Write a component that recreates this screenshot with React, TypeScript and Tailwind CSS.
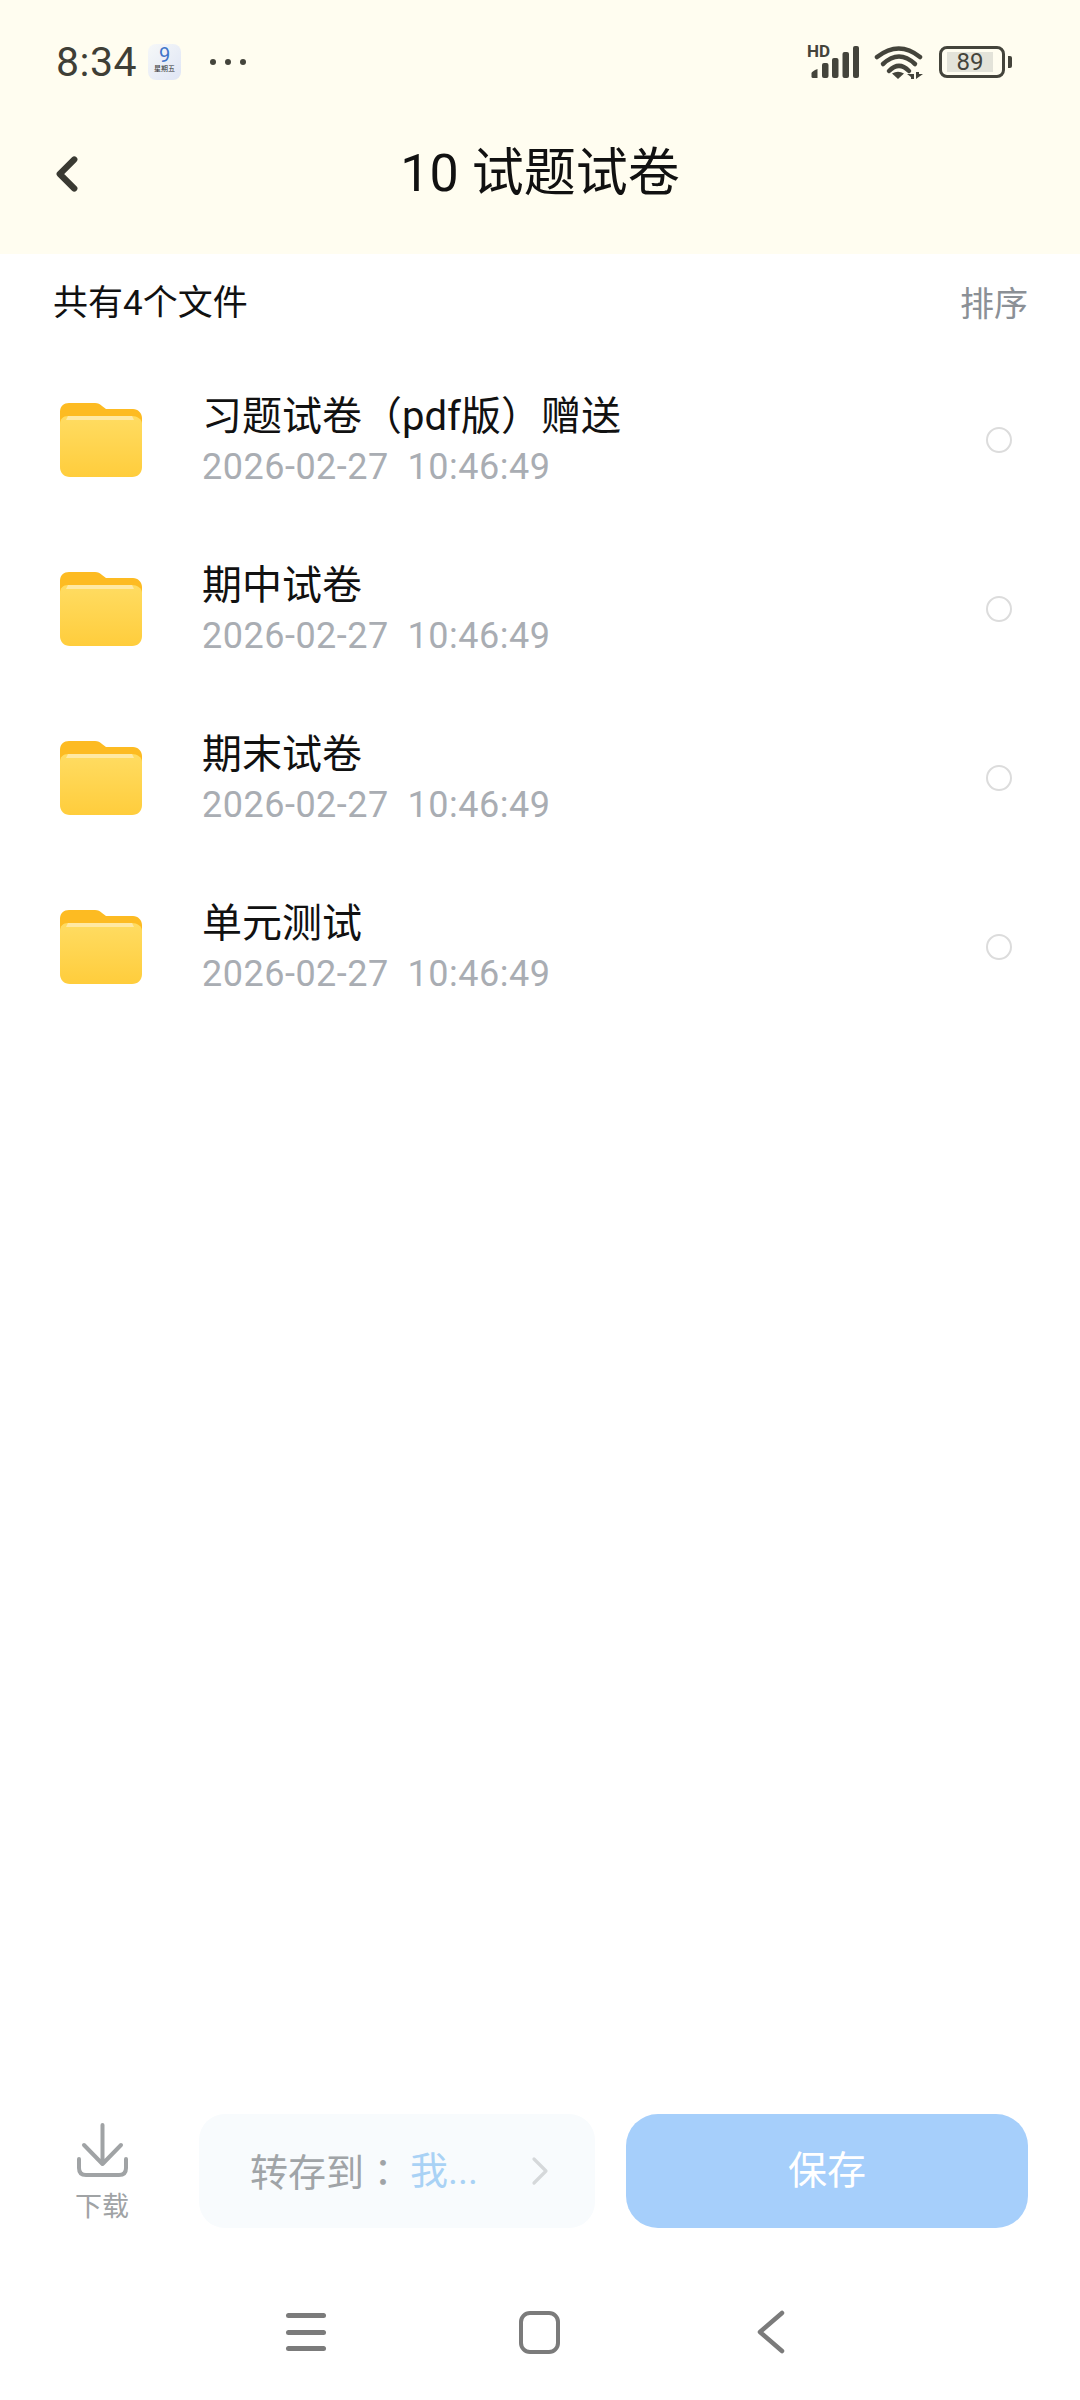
import { ChevronLeft, ChevronRight } from "lucide-react";

const files = ["习题试卷（pdf版）赠送", "期中试卷", "期末试卷", "单元测试"];

function FolderIcon() {
  return (
    <svg width="84" height="76" viewBox="0 0 84 76" className="shrink-0" aria-hidden>
      <defs>
        <linearGradient id="folder-front" x1="0" y1="0" x2="0" y2="1">
          <stop offset="0" stopColor="#ffdc62" />
          <stop offset="1" stopColor="#ffcd3c" />
        </linearGradient>
      </defs>
      <path
        d="M1 10C1 4 5 1 10 1H36C39 1 41 2 43 4L47 7H74C79 7 83 11 83 16V30H1Z"
        fill="#fdbb22"
      />
      <path d="M9 14H73C78 14 83 17 83 22V65C83 71 79 75 73 75H11C5 75 1 71 1 65V22C1 17 4 14 9 14Z" fill="url(#folder-front)" />
      <path d="M9 14H73L75 18H7Z" fill="#ffe9a3" />
    </svg>
  );
}

function StatusIcons() {
  return (
    <div className="flex items-center">
      <div className="relative h-[34px] w-[50px]">
        <span className="absolute left-[-2px] top-[-2px] font-['Roboto'] text-[17px] font-bold leading-[16px] text-[#44443b]">HD</span>
        <svg width="50" height="34" viewBox="0 0 50 34" className="absolute left-0 top-0" aria-hidden>
          <path d="M4 33a1.500 1.500 0 0 1-1.500-1.500V28C2.500 27 5 25.500 8.500 24V33Z" fill="#44443b" />
          <rect x="13" y="18" width="6.500" height="15" rx="2" fill="#44443b" />
          <rect x="23" y="13" width="6.500" height="20" rx="2" fill="#44443b" />
          <rect x="33.500" y="7" width="6.500" height="26" rx="2" fill="#44443b" />
          <rect x="44" y="1" width="6" height="32" rx="2" fill="#44443b" />
        </svg>
      </div>
      <svg width="50" height="36" viewBox="0 0 50 36" className="ml-[15px]" fill="none" aria-hidden>
        <path d="M3 13Q25 -4 46 13" stroke="#44443b" strokeWidth="4.500" strokeLinecap="round" />
        <path d="M9 20Q25 5 41 20" stroke="#44443b" strokeWidth="4.500" strokeLinecap="round" />
        <path d="M15 27Q25 17 35 27" stroke="#44443b" strokeWidth="4.500" strokeLinecap="round" />
        <path d="M18 29.500Q24 26 30 29.500L24 35Z" fill="#44443b" />
        <path d="M33 30H40V35H37V33ZM42 28H45V30H49L42 35Z" fill="#44443b" />
      </svg>
      <div className="ml-[15px] flex items-center">
        <div className="flex h-[32px] w-[66px] items-center rounded-[8px] border-[3px] border-[#44443b] pl-[5px]">
          <div className="flex h-[20px] w-[46px] items-center justify-center bg-[#e3e3d9] font-['Roboto'] text-[24px] leading-none text-[#44443b]">
            89
          </div>
        </div>
        <div className="ml-[3px] h-[12px] w-[4px] rounded-r-[2px] bg-[#44443b]" />
      </div>
    </div>
  );
}

function FileRow({ name }: { name: string }) {
  return (
    <div className="flex h-[169px] items-center pl-[59px] pr-[68px]">
      <FolderIcon />
      <div className="ml-[59px] min-w-0 flex-1 pt-[3px]">
        <div className="text-[40px] leading-[50px] text-[#111]">{name}</div>
        <div className="mt-[1px] whitespace-pre text-[36px] leading-[48px] tracking-[0.5px] text-[#a9adb3]">2026-02-27  10:46:49</div>
      </div>
      <div className="h-[26px] w-[26px] rounded-full border-2 border-[#dcdcdc]" />
    </div>
  );
}

export default function App() {
  return (
    <div className="flex h-[2400px] w-[1080px] flex-col bg-white font-['Roboto','Noto_Sans_CJK_SC',sans-serif]">
      <header className="h-[254px] shrink-0 bg-[#fffdf0] text-[#3f3f36]">
        <div className="flex h-[124px] items-center justify-between pl-[56px] pr-[68px]">
          <div className="flex items-center">
            <span className="text-[41px] leading-none tracking-[0.5px]">8:34</span>
            <div className="ml-[11px] flex h-[36px] w-[33px] flex-col items-center rounded-[8px] bg-gradient-to-br from-[#f6f8f8] to-[#dfe5f5]">
              <span className="text-[20px] leading-[22px] text-[#3f74c9]">9</span>
              <span className="mt-[-1px] text-[7px] leading-[8px] text-[#333]">星期五</span>
            </div>
            <div className="ml-[29px] flex gap-[9px]">
              <span className="h-[6px] w-[6px] rounded-full bg-[#44443b]" />
              <span className="h-[6px] w-[6px] rounded-full bg-[#44443b]" />
              <span className="h-[6px] w-[6px] rounded-full bg-[#44443b]" />
            </div>
          </div>
          <StatusIcons />
        </div>
        <div className="relative flex h-[100px] items-center justify-center">
          <ChevronLeft className="absolute left-[38px] top-[21px] h-[58px] w-[58px] text-[#3a3a32]" strokeWidth={2.6} />
          <h1 className="text-[52px] font-normal leading-none text-[#111]">10 试题试卷</h1>
        </div>
      </header>

      <div className="flex h-[98px] shrink-0 items-center justify-between pl-[53px] pr-[52px] pt-[2px]">
        <span className="text-[35px] text-[#111]">共有4个文件</span>
        <span className="text-[34px] text-[#8b9096]">排序</span>
      </div>

      <div className="mt-[3px] flex flex-col">
        {files.map((name) => (
          <FileRow key={name} name={name} />
        ))}
      </div>

      <div className="flex-1" />

      <div className="flex h-[114px] shrink-0 items-stretch pl-[75px] pr-[52px]">
        <div className="flex w-[54px] flex-col items-center">
          <svg width="51" height="54" viewBox="0 0 51 54" fill="none" stroke="#a0a3a5" strokeWidth="4" strokeLinecap="round" strokeLinejoin="round" className="mt-[9px] shrink-0" aria-hidden>
            <path d="M25.500 2V41M7 22L25.500 41L44 22" />
            <path d="M2 36V45C2 49.500 4.500 52 9 52H42C46.500 52 49 49.500 49 45V36" />
          </svg>
          <span className="mt-[13px] whitespace-nowrap text-[27px] leading-[34px] text-[#a0a3a5]">下载</span>
        </div>
        <div className="ml-[70px] flex w-[396px] items-center rounded-[26px] bg-[#f8fbfd] pl-[51px]">
          <span className="whitespace-nowrap text-[38px] text-[#a0a4a7]">
            转存到<span className="font-['Noto_Sans_CJK_TC']">：</span>
          </span>
          <span className="ml-[8px] whitespace-nowrap text-[38px] text-[#a9d2f5]">我...</span>
          <ChevronRight className="ml-[38px] h-[48px] w-[48px] text-[#d5d8da]" strokeWidth={1.6} />
        </div>
        <button type="button" className="ml-[31px] flex-1 rounded-[32px] bg-[#a6cffb] text-[39px] text-white">
          保存
        </button>
      </div>

      <div className="flex h-[172px] shrink-0 items-center pl-[286px] pt-[36px]">
        <div className="flex h-[38px] w-[40px] flex-col justify-between">
          <span className="h-[5px] rounded-full bg-[#7b7b7b]" />
          <span className="h-[5px] rounded-full bg-[#7b7b7b]" />
          <span className="h-[5px] rounded-full bg-[#7b7b7b]" />
        </div>
        <div className="ml-[193px] h-[43px] w-[41px] rounded-[11px] border-[4px] border-[#7b7b7b]" />
        <svg width="28" height="44" viewBox="0 0 28 44" fill="none" className="ml-[197px]" aria-hidden>
          <path d="M25 3L3 22L25 41" stroke="#7b7b7b" strokeWidth="4.500" strokeLinecap="round" strokeLinejoin="round" />
        </svg>
      </div>
    </div>
  );
}
